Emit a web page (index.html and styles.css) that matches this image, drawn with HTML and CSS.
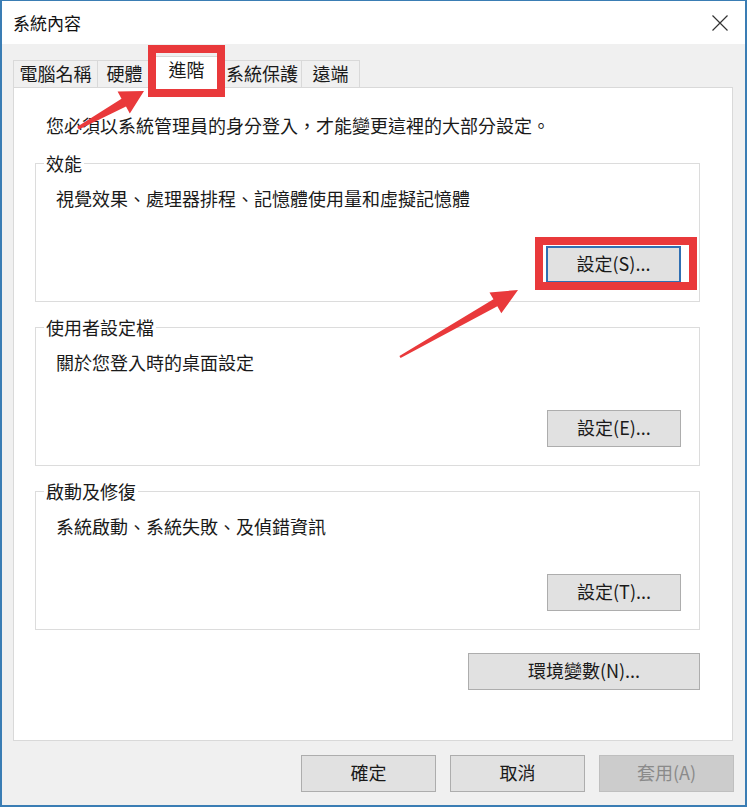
FILE: index.html
```html
<!DOCTYPE html>
<html lang="zh-Hant">
<head>
<meta charset="utf-8">
<title>系統內容</title>
<link rel="stylesheet" href="styles.css">
</head>
<body>
<div class="window">
  <div class="titlebar">
    <span class="title">系統內容</span>
    <svg class="close" width="16" height="16" viewBox="0 0 16 16"><path d="M0.5 0.5 L15.5 15.5 M15.5 0.5 L0.5 15.5" stroke="#333" stroke-width="1.2" fill="none"/></svg>
  </div>
  <div class="body">
    <div class="tabs">
      <div class="tab tab-1">電腦名稱</div>
      <div class="tab tab-2">硬體</div>
      <div class="tab tab-sel">進階</div>
      <div class="tab tab-4">系統保護</div>
      <div class="tab tab-5">遠端</div>
    </div>
    <div class="panel">
      <p class="intro">您必須以系統管理員的身分登入，才能變更這裡的大部分設定。</p>
      <fieldset class="group">
        <legend>效能</legend>
        <p class="desc">視覺效果、處理器排程、記憶體使用量和虛擬記憶體</p>
        <div class="row"><button class="btn btn-focus">設定(S)...</button></div>
      </fieldset>
      <fieldset class="group">
        <legend>使用者設定檔</legend>
        <p class="desc">關於您登入時的桌面設定</p>
        <div class="row"><button class="btn">設定(E)...</button></div>
      </fieldset>
      <fieldset class="group">
        <legend>啟動及修復</legend>
        <p class="desc">系統啟動、系統失敗、及偵錯資訊</p>
        <div class="row"><button class="btn">設定(T)...</button></div>
      </fieldset>
      <div class="row env-row"><button class="btn btn-env">環境變數(N)...</button></div>
    </div>
    <div class="actions">
      <button class="btn btn-action">確定</button>
      <button class="btn btn-action">取消</button>
      <button class="btn btn-action btn-disabled">套用(A)</button>
    </div>
  </div>
</div>
<div class="mark mark-tab"></div>
<div class="mark mark-btn"></div>
<svg class="arrows" width="747" height="807" viewBox="0 0 747 807">
  <polygon fill="#e9393b" points="77.2,126.8 121.5,98.8 117.6,91.6 144,91 129.8,113.6 126,106.6 78.8,129.6"/>
  <polygon fill="#e9393b" points="399.4,356 493.43,299.36 489.48,292.4 518,290 501.32,313.28 497.37,306.32 400.6,358"/>
</svg>
</body>
</html>
```

FILE: styles.css
```css
html, body {
  margin: 0;
  padding: 0;
}
body {
  position: relative;
  width: 747px;
  height: 807px;
  background: #ffffff;
  font-family: "Noto Sans CJK TC", "Noto Sans", sans-serif;
  font-size: 18px;
  color: #1a1a1a;
  overflow: hidden;
}
.window {
  width: 747px;
  height: 807px;
  box-sizing: border-box;
  border: 2px solid #3a7db4;
  border-top-width: 1px;
  display: flex;
  flex-direction: column;
}
.titlebar {
  height: 43px;
  background: #ffffff;
  display: flex;
  align-items: center;
  justify-content: space-between;
  padding: 0 17px 0 11px;
}
.title {
  font-size: 17px;
  line-height: 24px;
  color: #111;
}
.close {
  display: block;
}
.body {
  flex: 1;
  background: #f0f0f0;
  padding: 12px 12px 13px 11px;
  display: flex;
  flex-direction: column;
}
.tabs {
  height: 31px;
  display: flex;
  align-items: flex-end;
  position: relative;
  z-index: 1;
}
.tab {
  box-sizing: border-box;
  height: 27px;
  line-height: 24px;
  text-align: center;
  border: 1px solid #d9d9d9;
  border-bottom: none;
  background: #f0f0f0;
  margin-left: -1px;
  white-space: nowrap;
}
.tab-1 { width: 85px; margin-left: 0; }
.tab-2 { width: 55px; }
.tab-sel {
  width: 73px;
  height: 32px;
  line-height: 24px;
  margin-left: -2px;
  margin-bottom: -1px;
  background: #ffffff;
  position: relative;
  z-index: 2;
}
.tab-4 { width: 80px; }
.tab-5 { width: 59px; }
.panel {
  height: 654px;
  box-sizing: border-box;
  border: 1px solid #d9d9d9;
  background: #ffffff;
  padding: 0 32px 0 21px;
}
.intro {
  margin: 25px 0 14px 11px;
  line-height: 24px;
}
.group {
  margin: 0 0 13px 0;
  padding: 11px 18px 18px 20px;
  border: 1px solid #dcdcdc;
  min-inline-size: 0;
}
.group legend {
  padding: 0 2px;
  margin-left: -12px;
  line-height: 24px;
}
.desc {
  margin: 0;
  line-height: 24px;
}
.row {
  display: flex;
  justify-content: flex-end;
  margin-top: 36px;
}
.env-row {
  margin-top: 23px;
}
.btn {
  box-sizing: border-box;
  width: 134px;
  height: 37px;
  font-family: "Noto Sans CJK TC", "Noto Sans", sans-serif;
  font-size: 18px;
  color: #1a1a1a;
  background: #e1e1e1;
  border: 1px solid #adadad;
  padding: 0 0 3px 0;
  line-height: 24px;
}
.btn-focus {
  width: 135px;
  border: 2px solid #2f6fb3;
}
.btn-env {
  width: 232px;
}
.actions {
  margin-top: 14px;
  height: 37px;
  display: flex;
  justify-content: flex-end;
  gap: 14px;
  margin-right: -1px;
}
.btn-action {
  width: 135px;
}
.btn-disabled {
  background: #cccccc;
  border-color: #bfbfbf;
  color: #8a8a8a;
}
.mark {
  position: absolute;
  z-index: 5;
  box-sizing: border-box;
  border: 8px solid #e9393b;
  pointer-events: none;
}
.mark-tab {
  left: 148px;
  top: 45px;
  width: 77px;
  height: 52px;
}
.mark-btn {
  left: 535px;
  top: 237px;
  width: 162px;
  height: 53px;
}
.arrows {
  position: absolute;
  z-index: 6;
  left: 0;
  top: 0;
  pointer-events: none;
}
```
